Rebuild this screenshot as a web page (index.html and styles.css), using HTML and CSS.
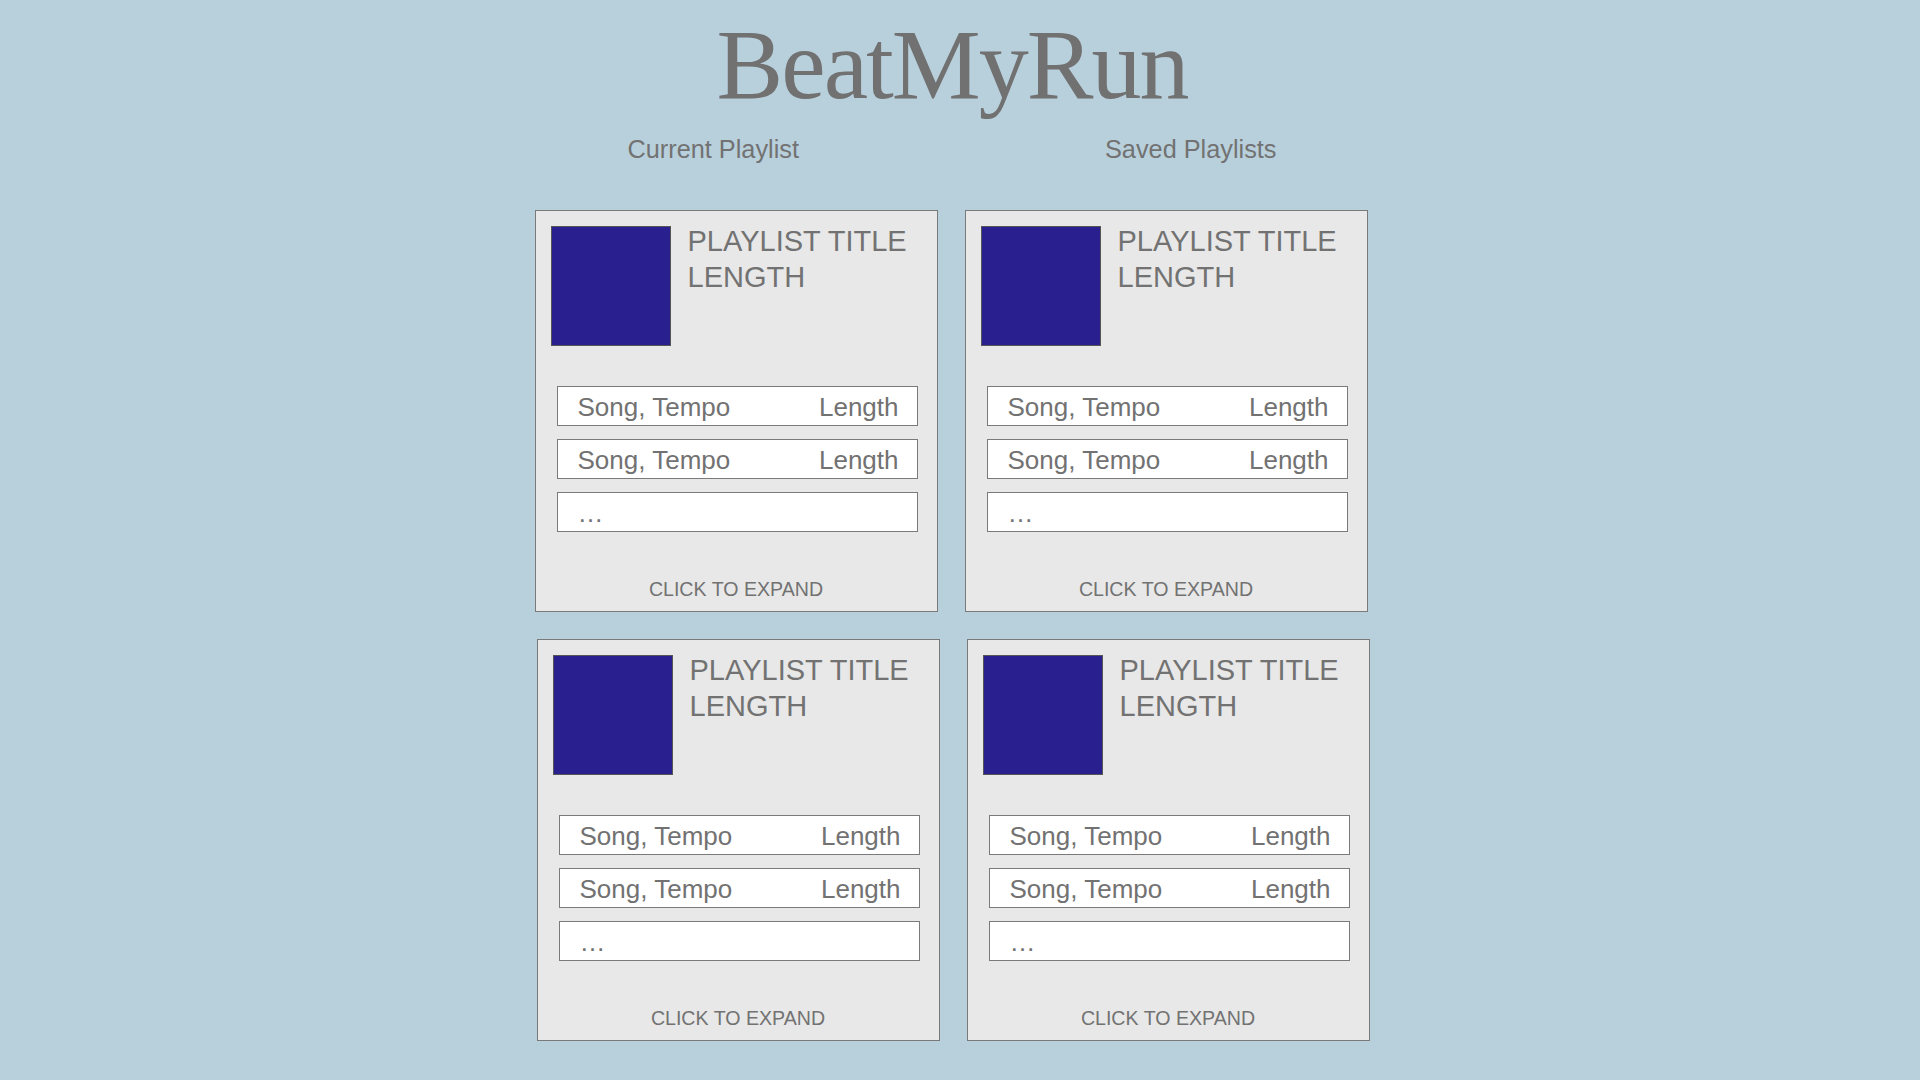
FILE: index.html
```html
<!DOCTYPE html>
<html>
<head>
<meta charset="utf-8">
<title>BeatMyRun</title>
<link rel="stylesheet" href="styles.css">
</head>
<body>
<div class="frame">
  <h1 class="logo">BeatMyRun</h1>
  <nav class="nav">
    <a class="nav-link">Current Playlist</a>
    <a class="nav-link">Saved Playlists</a>
  </nav>
  <main class="grid">
    <div class="row">
      <section class="card">
        <div class="card-head">
          <div class="art"></div>
          <div class="meta">PLAYLIST TITLE<br>LENGTH</div>
        </div>
        <ul class="songs">
          <li class="song"><span>Song, Tempo</span><span>Length</span></li>
          <li class="song"><span>Song, Tempo</span><span>Length</span></li>
          <li class="song"><span>…</span></li>
        </ul>
        <div class="expand">CLICK TO EXPAND</div>
      </section>
      <section class="card">
        <div class="card-head">
          <div class="art"></div>
          <div class="meta">PLAYLIST TITLE<br>LENGTH</div>
        </div>
        <ul class="songs">
          <li class="song"><span>Song, Tempo</span><span>Length</span></li>
          <li class="song"><span>Song, Tempo</span><span>Length</span></li>
          <li class="song"><span>…</span></li>
        </ul>
        <div class="expand">CLICK TO EXPAND</div>
      </section>
    </div>
    <div class="row row-shift">
      <section class="card">
        <div class="card-head">
          <div class="art"></div>
          <div class="meta">PLAYLIST TITLE<br>LENGTH</div>
        </div>
        <ul class="songs">
          <li class="song"><span>Song, Tempo</span><span>Length</span></li>
          <li class="song"><span>Song, Tempo</span><span>Length</span></li>
          <li class="song"><span>…</span></li>
        </ul>
        <div class="expand">CLICK TO EXPAND</div>
      </section>
      <section class="card">
        <div class="card-head">
          <div class="art"></div>
          <div class="meta">PLAYLIST TITLE<br>LENGTH</div>
        </div>
        <ul class="songs">
          <li class="song"><span>Song, Tempo</span><span>Length</span></li>
          <li class="song"><span>Song, Tempo</span><span>Length</span></li>
          <li class="song"><span>…</span></li>
        </ul>
        <div class="expand">CLICK TO EXPAND</div>
      </section>
    </div>
  </main>
</div>
</body>
</html>
```
FILE: styles.css
```css
html, body {
  margin: 0;
  padding: 0;
}
body {
  background: #b8d0dc;
  color: #727272;
  font-family: "Liberation Sans", Arial, sans-serif;
  width: 1920px;
  height: 1080px;
  overflow: hidden;
}
.frame {
  display: flex;
  flex-direction: column;
  align-items: center;
  padding-right: 16px;
  padding-top: 10px;
}
.logo {
  margin: 0;
  font-family: "Liberation Serif", "Times New Roman", serif;
  font-weight: normal;
  font-size: 100px;
  line-height: 110px;
  letter-spacing: -2px;
  color: #717171;
}
.nav {
  display: flex;
  gap: 306px;
  margin-top: 14px;
  font-size: 25.3px;
  line-height: 30px;
}
.nav-link {
  color: #727272;
}
.grid {
  margin-top: 46px;
  display: flex;
  flex-direction: column;
  gap: 27px;
}
.row {
  display: flex;
  gap: 27px;
}
.row-shift {
  padding-left: 2px;
}
.card {
  box-sizing: border-box;
  width: 403px;
  border: 1px solid #7a7a7a;
  background: #e8e8e8;
  padding: 15px 15px 10px;
  display: flex;
  flex-direction: column;
}
.card-head {
  display: flex;
  align-items: flex-start;
  gap: 17px;
}
.art {
  box-sizing: border-box;
  width: 120px;
  height: 120px;
  background: #2a1f8f;
  border: 1px solid #555;
  flex: none;
}
.meta {
  margin-top: -3px;
  font-size: 29px;
  line-height: 36px;
}
.songs {
  list-style: none;
  margin: 40px 4px 0 6px;
  padding: 0;
  display: flex;
  flex-direction: column;
  gap: 13px;
}
.song {
  box-sizing: border-box;
  height: 40px;
  border: 1px solid #7a7a7a;
  background: #ffffff;
  display: flex;
  justify-content: space-between;
  padding: 2px 18px 0 20px;
  font-size: 26px;
  line-height: 36px;
}
.expand {
  margin-top: 45px;
  text-align: center;
  font-size: 19.6px;
  line-height: 24px;
}
```
